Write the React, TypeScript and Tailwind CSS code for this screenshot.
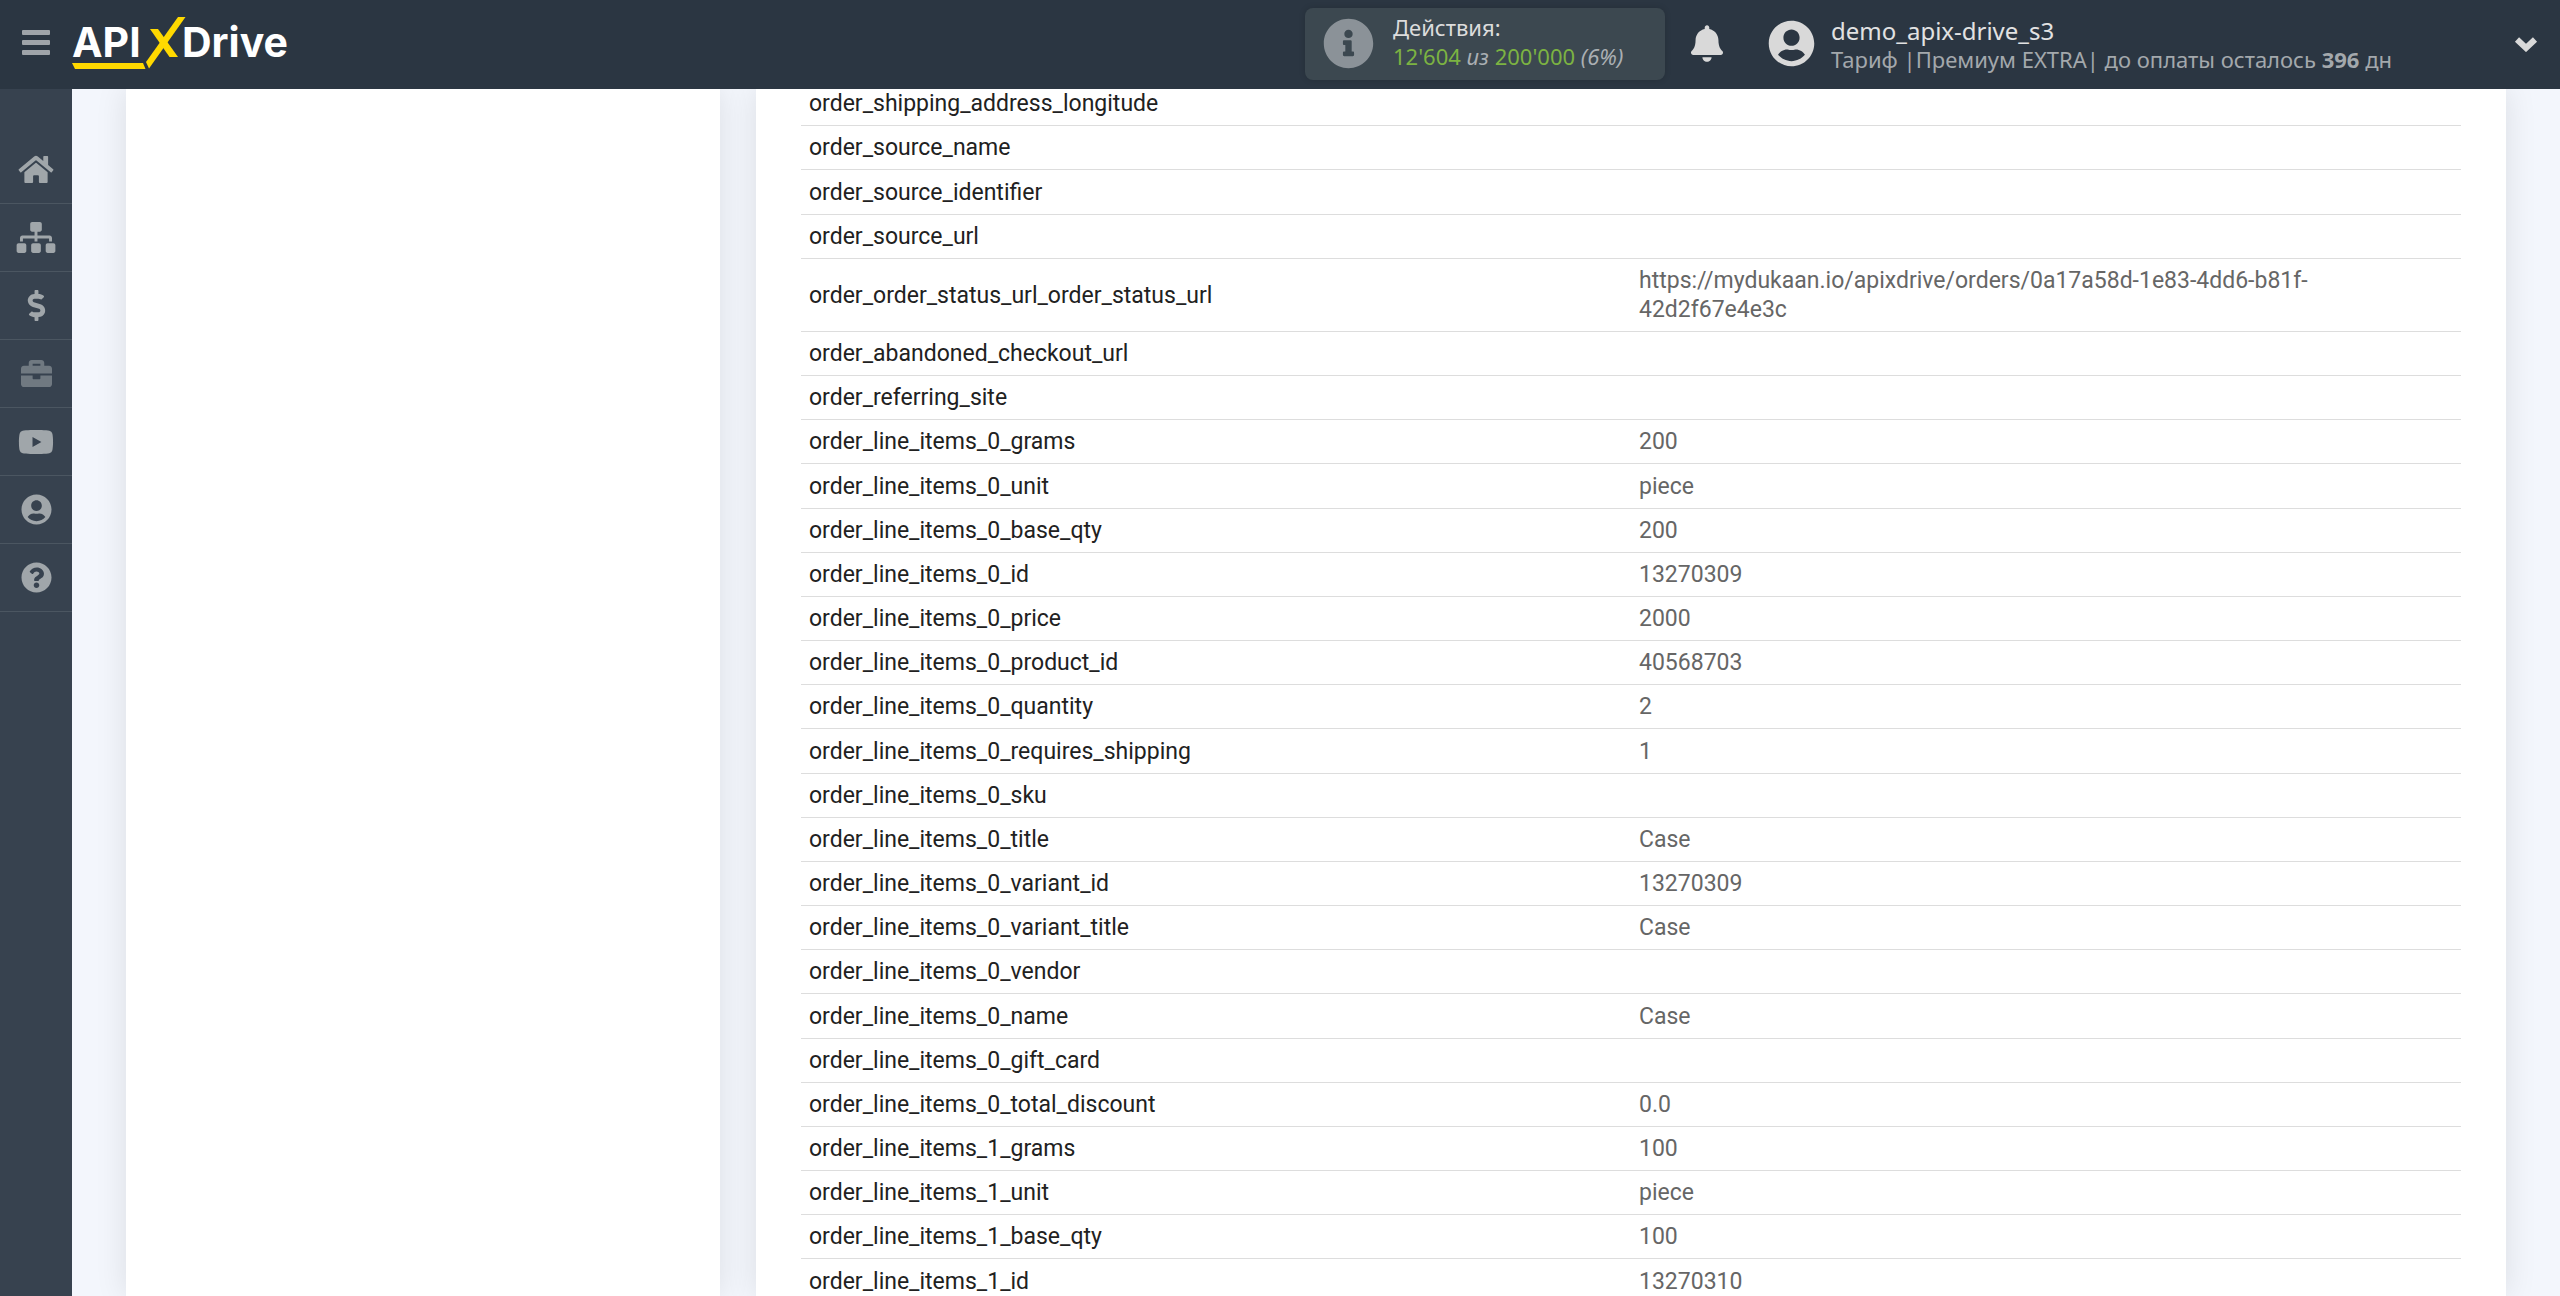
import type { ReactNode } from "react";
import {
  FaBell,
  FaBriefcase,
  FaDollarSign,
  FaHome,
  FaInfoCircle,
  FaQuestionCircle,
  FaSitemap,
  FaUserCircle,
  FaYoutube,
} from "react-icons/fa";

const rows: [string, string][] = [
  ["order_shipping_address_longitude", ""],
  ["order_source_name", ""],
  ["order_source_identifier", ""],
  ["order_source_url", ""],
  [
    "order_order_status_url_order_status_url",
    "https://mydukaan.io/apixdrive/orders/0a17a58d-1e83-4dd6-b81f-42d2f67e4e3c",
  ],
  ["order_abandoned_checkout_url", ""],
  ["order_referring_site", ""],
  ["order_line_items_0_grams", "200"],
  ["order_line_items_0_unit", "piece"],
  ["order_line_items_0_base_qty", "200"],
  ["order_line_items_0_id", "13270309"],
  ["order_line_items_0_price", "2000"],
  ["order_line_items_0_product_id", "40568703"],
  ["order_line_items_0_quantity", "2"],
  ["order_line_items_0_requires_shipping", "1"],
  ["order_line_items_0_sku", ""],
  ["order_line_items_0_title", "Case"],
  ["order_line_items_0_variant_id", "13270309"],
  ["order_line_items_0_variant_title", "Case"],
  ["order_line_items_0_vendor", ""],
  ["order_line_items_0_name", "Case"],
  ["order_line_items_0_gift_card", ""],
  ["order_line_items_0_total_discount", "0.0"],
  ["order_line_items_1_grams", "100"],
  ["order_line_items_1_unit", "piece"],
  ["order_line_items_1_base_qty", "100"],
  ["order_line_items_1_id", "13270310"],
];

const navItems: { label: string; icon: ReactNode; dim?: boolean }[] = [
  { label: "Главная", icon: <FaHome className="h-[31px] w-9" /> },
  { label: "Связи", icon: <FaSitemap className="h-[31px] w-10" /> },
  { label: "Оплата", icon: <FaDollarSign className="size-[31px]" /> },
  { label: "Проекты", icon: <FaBriefcase className="size-[31px]" />, dim: true },
  { label: "Видео", icon: <FaYoutube className="size-9" /> },
  { label: "Профиль", icon: <FaUserCircle className="size-[31px]" /> },
  { label: "Помощь", icon: <FaQuestionCircle className="size-[31px]" /> },
];

function Logo() {
  return (
    <svg viewBox="0 0 222 56" className="h-14 w-[222px]" role="img" aria-label="APIXDrive">
      <g fill="#ffffff" fontFamily="Inter, sans-serif" fontWeight="700" fontSize="41">
        <text x="0" y="43">API</text>
        <text x="110" y="43">Drive</text>
      </g>
      <g fill="#ffd900">
        <path d="M0 49H71L73.500 55H3Z" />
        <path d="M106 3H113.500L77 54.500L74 48Z" />
        <path d="M78 15H86L106 43H97.500Z" />
      </g>
    </svg>
  );
}

function MenuIcon() {
  return (
    <svg viewBox="0 0 28 25" className="h-[25px] w-7" fill="currentColor" aria-hidden="true">
      <rect width="28" height="5" rx="1" />
      <rect y="10" width="28" height="5" rx="1" />
      <rect y="20" width="28" height="5" rx="1" />
    </svg>
  );
}

function ChevronIcon() {
  return (
    <svg
      viewBox="0 0 24 16"
      className="ml-auto h-4 w-6 text-[#d9d9d9]"
      fill="none"
      stroke="currentColor"
      aria-hidden="true"
    >
      <path d="M3 3.500L12 12L21 3.500" strokeWidth="6" />
    </svg>
  );
}

function Header() {
  return (
    <header className="relative z-10 flex h-[89px] shrink-0 items-center bg-[#2b3642] pb-0.5 font-['Noto_Sans',sans-serif]">
      <button
        type="button"
        aria-label="Меню"
        className="flex w-[72px] shrink-0 justify-center pb-0.5 text-[#9fa4a9]"
      >
        <MenuIcon />
      </button>
      <a href="#" className="mb-1 block">
        <Logo />
      </a>
      <div className="ml-auto flex h-[72px] w-[360px] items-center gap-[19px] rounded-lg bg-[#3c4850] pl-[18px] shadow-[0_0_6px_rgba(0,0,0,0.15)]">
        <FaInfoCircle className="size-[51px] text-[#8b9298]" />
        <div className="pb-1">
          <p className="text-[22px] leading-[29px] text-[#dcdcdc]">Действия:</p>
          <p className="text-[22px] leading-[29px] whitespace-nowrap text-[#7cb342]">
            12'604 <em className="text-[#aaafb3]">из</em> 200'000 <em className="text-[#aaafb3]">(6%)</em>
          </p>
        </div>
      </div>
      <button type="button" aria-label="Уведомления" className="ml-[26px] text-[#d9d9d9]">
        <FaBell className="h-[37px] w-8" />
      </button>
      <button type="button" className="ml-[45px] flex w-[792px] shrink-0 items-center pr-[22px] text-left">
        <FaUserCircle className="size-[47px] shrink-0 text-[#d9d9d9]" />
        <span className="ml-4 flex flex-col pt-0.5 whitespace-nowrap">
          <span className="text-2xl leading-[29px] text-[#e2e2e2]">demo_apix-drive_s3</span>
          <span className="text-[22px] leading-[29px] text-[#a3a8ac]">
            Тариф |Премиум EXTRA| до оплаты осталось <b>396</b> дн
          </span>
        </span>
        <ChevronIcon />
      </button>
    </header>
  );
}

function Sidebar() {
  return (
    <nav className="w-[72px] shrink-0 bg-[#37424f] pt-[47px]">
      <ul>
        {navItems.map((item) => (
          <li key={item.label} className="h-[68px] border-b border-[#4b5661]">
            <a
              href="#"
              aria-label={item.label}
              className={`flex h-full items-center justify-center ${item.dim ? "text-[#707981]" : "text-[#a0a6aa]"}`}
            >
              {item.icon}
            </a>
          </li>
        ))}
      </ul>
    </nav>
  );
}

export default function App() {
  return (
    <div className="flex h-screen flex-col overflow-hidden bg-[#f3f6fc]">
      <Header />
      <div className="flex min-h-0 flex-1">
        <Sidebar />
        <main className="flex min-w-0 flex-1 gap-9 overflow-hidden px-[54px] font-[Roboto,sans-serif]">
          <aside className="w-[594px] shrink-0 bg-white shadow-[0_0_30px_rgba(0,0,0,0.1)]" />
          <section className="min-w-0 flex-1 bg-white px-[45px] shadow-[0_0_30px_rgba(0,0,0,0.1)]">
            <table className="-mt-[7px] w-full table-fixed border-collapse text-[23px] leading-[29px]">
              <tbody>
                {rows.map(([name, value]) => (
                  <tr key={name} className="border-b border-[#dddddd] nth-[6n+3]:*:pt-2">
                    <th scope="row" className="px-2 py-[7px] text-left font-normal text-[#212121]">
                      {name}
                    </th>
                    <td className="px-2 py-[7px] text-[#666666]">{value}</td>
                  </tr>
                ))}
              </tbody>
            </table>
          </section>
        </main>
      </div>
    </div>
  );
}
